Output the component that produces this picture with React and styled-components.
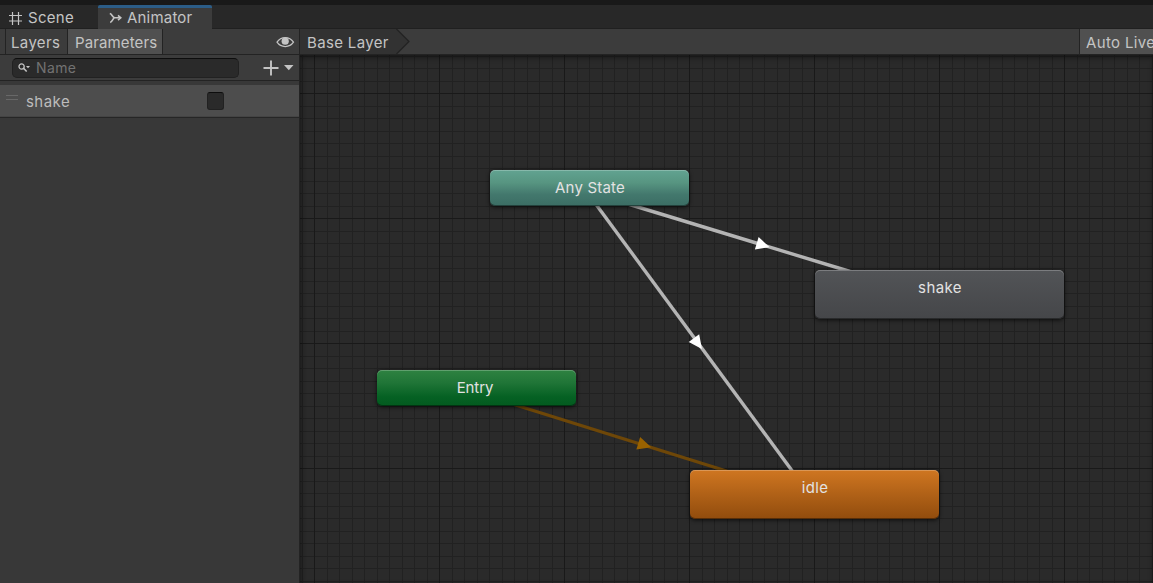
import React from "react";
import styled, { createGlobalStyle } from "styled-components";

const Global = createGlobalStyle`
  * { box-sizing: border-box; }
  body { margin: 0; background: #191919; overflow: hidden; }
`;

const Editor = styled.div`
  width: 100vw;
  height: 583px;
  padding-top: 5px;
  display: flex;
  flex-direction: column;
  overflow: hidden;
  background: #191919;
  color: #c4c4c4;
  font: 15px/20px Inter, "Liberation Sans", sans-serif;
  letter-spacing: 0.35px;
  white-space: nowrap;
`;

const TabBar = styled.div`
  height: 24px;
  flex: none;
  display: flex;
  background: #282828;
  box-shadow: inset 0 -1px #202020;
`;

const Tab = styled.div`
  width: ${(p) => p.$width}px;
  padding: ${(p) => (p.$active ? "0 0 1px 11px" : "2px 0 0 9px")};
  display: flex;
  align-items: center;
  gap: ${(p) => (p.$active ? 5 : 6)}px;
  letter-spacing: ${(p) => (p.$active ? 0.2 : 0.3)}px;
  background: ${(p) => (p.$active ? "#3c3c3c" : "transparent")};
  border-top: ${(p) => (p.$active ? "3px solid #2c5d87" : "0")};
  border-radius: ${(p) => (p.$active ? "2px 2px 0 0" : "0")};
  svg { flex: none; }
`;

const Body = styled.div`
  flex: 1;
  min-height: 0;
  display: flex;
`;

const Sidebar = styled.div`
  width: 300px;
  flex: none;
  display: flex;
  flex-direction: column;
  background: #383838;
  border-right: 1px solid #232323;
`;

const Toolbar = styled.div`
  height: 26px;
  flex: none;
  display: flex;
  background: #3c3c3c;
  border-bottom: 1px solid #232323;
`;

const ToolButton = styled.div`
  width: ${(p) => p.$width}px;
  padding: 4px 0 0 ${(p) => p.$inset ?? 6}px;
  line-height: 20px;
  letter-spacing: ${(p) => p.$tracking ?? 0.35}px;
  background: ${(p) => (p.$active ? "#505050" : "transparent")};
  border-left: 1px solid #232323;
  border-right: ${(p) => (p.$last ? "1px solid #232323" : "0")};
`;

const SidebarToolbar = styled(Toolbar)`
  padding-left: 5px;
`;

const EyeButton = styled.div`
  margin-left: auto;
  padding: 7px 4px 0 0;
  line-height: 0;
`;

const SearchRow = styled(Toolbar)`
  padding: 3px 5px 0 12px;
`;

const SearchField = styled.div`
  width: 227px;
  height: 20px;
  padding-left: 5px;
  display: flex;
  align-items: center;
  gap: 5px;
  font-size: 14px;
  letter-spacing: 0.4px;
  color: #727272;
  background: #2a2a2a;
  border: 1px solid #212121;
  border-top-color: #0d0d0d;
  border-radius: 5px;
`;

const AddButton = styled.div`
  margin-left: auto;
  padding-top: 2px;
  line-height: 0;
`;

const ParameterRow = styled.div`
  margin-top: 4px;
  height: 33px;
  padding: 0 75px 0 6px;
  display: flex;
  align-items: center;
  background: #4d4d4d;
  border-bottom: 1px solid #262626;
  box-shadow: inset 0 -1px #444444;
`;

const Grip = styled.div`
  width: 12px;
  height: 5px;
  margin: -7px 8px 0 0;
  border: solid #686868;
  border-width: 1px 0;
`;

const ParameterName = styled.div`
  padding-top: 2px;
  letter-spacing: 0.45px;
  color: #bcbcbc;
`;

const Checkbox = styled.div`
  width: 17px;
  height: 18px;
  margin-left: auto;
  background: #2a2a2a;
  border: 1px solid #212121;
  border-top-color: #0d0d0d;
  border-radius: 3px;
`;

const Main = styled.div`
  flex: 1;
  min-width: 0;
  display: flex;
  flex-direction: column;
`;

const Crumb = styled.div`
  width: 110px;
  display: flex;
  justify-content: space-between;
  padding-left: 7px;
  background: linear-gradient(90deg, #323232 97px, transparent 97px);
  svg { flex: none; }
`;

const CrumbLabel = styled.span`
  padding-top: 4px;
`;

const AutoLive = styled(ToolButton)`
  margin-left: auto;
`;

const Graph = styled.div`
  position: relative;
  flex: 1;
  overflow: hidden;
  background-color: #2a2a2a;
  background-image:
    linear-gradient(90deg, #191919 1px, transparent 1px),
    linear-gradient(#191919 1px, transparent 1px),
    linear-gradient(90deg, #212121 1px, transparent 1px, transparent 13px, #212121 13px, #212121 14px, transparent 14px),
    linear-gradient(#212121 1px, transparent 1px, transparent 13px, #212121 13px, #212121 14px, transparent 14px);
  background-size: 125px 125px, 125px 125px, 25px 25px, 25px 25px;
  background-position: 14px 38px;
  &::after {
    content: "";
    position: absolute;
    inset: 0;
    box-shadow: inset 0 3px 5px rgba(0, 0, 0, 0.35), inset 3px 0 4px rgba(0, 0, 0, 0.12);
    pointer-events: none;
  }
`;

const Links = styled.svg`
  position: absolute;
  inset: 0;
`;

const Node = styled.div`
  position: absolute;
  left: ${(p) => p.$x}px;
  top: ${(p) => p.$y}px;
  width: ${(p) => p.$w}px;
  height: ${(p) => p.$h}px;
  padding: 8px ${(p) => p.$trail ?? 0}px 0 1px;
  text-align: center;
  letter-spacing: ${(p) => p.$tracking}px;
  color: #e2e2e2;
  background: ${(p) => p.$fill};
  border-radius: 5px;
  box-shadow: inset 0 1px rgba(255, 255, 255, 0.24), inset 0 -1px rgba(0, 0, 0, 0.4), 0 1px 4px rgba(0, 0, 0, 0.75);
`;

const nodes = [
  { label: "Any State", x: 190, y: 115, w: 199, h: 36, tracking: 0.2, fill: "linear-gradient(#62a391 0%, #579581 35%, #43786d 68%, #3b6d64 100%)" },
  { label: "shake", x: 515, y: 215, w: 249, h: 49, tracking: 0.4, fill: "linear-gradient(#525457, #454649)" },
  { label: "Entry", x: 77, y: 315, w: 199, h: 36, tracking: -0.1, trail: 4, fill: "linear-gradient(#2e8241 0%, #207537 35%, #056123 75%, #035a1f 100%)" },
  { label: "idle", x: 390, y: 415, w: 249, h: 49, tracking: 0.3, fill: "linear-gradient(#cf7621, #914c0d)" },
];

const links = [
  { mid: [462.5, 190], angle: 16.8, line: "#b4b4b4", head: "#ffffff", start: [328, 149], end: [550, 216.5] },
  { mid: [397.5, 288], angle: 53.7, line: "#b4b4b4", head: "#ffffff", start: [295, 148], end: [493, 417] },
  { mid: [344, 390], angle: 16.8, line: "#6e4708", head: "#996200", start: [214, 349.5], end: [428, 416.5] },
];

const HashIcon = () => (
  <svg width="13" height="13" viewBox="0 0 13 13" fill="none" stroke="#c4c4c4" strokeWidth="1.2">
    <path d="M3.5 0v13M9.5 0v13M0 3.5h13M0 9h13" />
  </svg>
);

const AnimatorIcon = () => (
  <svg width="13" height="12" viewBox="0 0 13 12" fill="none" stroke="#c4c4c4" strokeWidth="1.6">
    <path d="M.8 1.5C3.5 2.2 3.2 5.8 6 5.8h5.5M1.2 10.5C3 10 3.6 7.5 5 6" />
    <path d="M9 3.4 11.8 5.8 9 8.2" />
  </svg>
);

const EyeIcon = () => (
  <svg width="19" height="13" viewBox="0 0 19 13">
    <path d="M1 6.2C5 0 13.5 0 17.5 6.2 13.5 12 5 12 1 6.2Z" fill="none" stroke="#c4c4c4" strokeWidth="1.2" />
    <circle cx="9.2" cy="5.2" r="3.6" fill="#c4c4c4" />
  </svg>
);

const SearchIcon = () => (
  <svg width="13" height="10" viewBox="0 0 13 10">
    <circle cx="3.6" cy="3.5" r="2.6" fill="none" stroke="#c4c4c4" strokeWidth="1.3" />
    <path d="m5.5 5.3 3.2 3.2" stroke="#c4c4c4" strokeWidth="1.6" />
    <path d="M8 3h4L10 5.2Z" fill="#c4c4c4" />
  </svg>
);

const AddIcon = () => (
  <svg width="31" height="16" viewBox="0 0 31 16">
    <path d="M8 .5v15M.5 8h15" stroke="#c4c4c4" strokeWidth="1.9" />
    <path d="M21 5h9.5l-4.7 5.2Z" fill="#c4c4c4" />
  </svg>
);

export default function App() {
  return (
    <Editor>
      <Global />
      <TabBar>
        <Tab $width={98}><HashIcon />Scene</Tab>
        <Tab $width={114} $active><AnimatorIcon />Animator</Tab>
      </TabBar>
      <Body>
        <Sidebar>
          <SidebarToolbar>
            <ToolButton $width={62} $inset={5}>Layers</ToolButton>
            <ToolButton $width={96} $active $last $inset={7} $tracking={0.12}>Parameters</ToolButton>
            <EyeButton><EyeIcon /></EyeButton>
          </SidebarToolbar>
          <SearchRow>
            <SearchField><SearchIcon />Name</SearchField>
            <AddButton><AddIcon /></AddButton>
          </SearchRow>
          <ParameterRow>
            <Grip />
            <ParameterName>shake</ParameterName>
            <Checkbox />
          </ParameterRow>
        </Sidebar>
        <Main>
          <Toolbar>
            <Crumb>
              <CrumbLabel>Base Layer</CrumbLabel>
              <svg width="14" height="25" viewBox="0 0 14 25">
                <path d="M0 0 13 12.5 0 25Z" fill="#323232" />
                <path d="M.5 0 13 12.5.5 25" fill="none" stroke="#222" strokeWidth="1.2" />
              </svg>
            </Crumb>
            <AutoLive $width={74} $active>Auto Live</AutoLive>
          </Toolbar>
          <Graph>
            <Links width="853" height="528">
              {links.map((l) => (
                <g key={l.mid.join()}>
                  <path d={`M${l.start}L${l.end}`} stroke={l.line} strokeWidth="3.4" />
                  <path d="M-6-6.5 7.5 0-6 6.5Z" fill={l.head} transform={`translate(${l.mid}) rotate(${l.angle})`} />
                </g>
              ))}
            </Links>
            {nodes.map((n) => (
              <Node key={n.label} $x={n.x} $y={n.y} $w={n.w} $h={n.h} $fill={n.fill} $tracking={n.tracking} $trail={n.trail}>{n.label}</Node>
            ))}
          </Graph>
        </Main>
      </Body>
    </Editor>
  );
}
